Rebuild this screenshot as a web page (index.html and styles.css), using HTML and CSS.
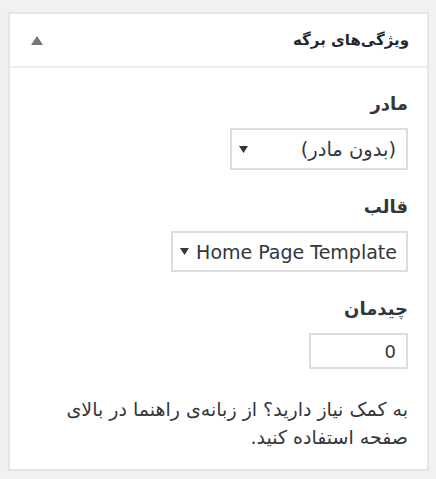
FILE: index.html
```html
<!DOCTYPE html>
<html lang="fa" dir="rtl">
<head>
<meta charset="utf-8">
<link rel="stylesheet" href="styles.css">
</head>
<body>
<div class="postbox">
  <div class="postbox-header">
    <h2 class="hndle">ویژگی‌های برگه</h2>
    <span class="toggle"><svg width="12" height="9" viewBox="0 0 12 9"><polygon points="6,0 12,9 0,9" fill="#72777c"/></svg></span>
  </div>
  <div class="inside">
    <p class="label">مادر</p>
    <div class="select select-parent">
      <span class="select-text">(بدون مادر)</span>
      <svg class="arrow" width="9" height="7" viewBox="0 0 9 7"><polygon points="0,0 9,0 4.5,7" fill="#32373c"/></svg>
    </div>
    <p class="label">قالب</p>
    <div class="select select-template">
      <span class="select-text ltr">Home Page Template</span>
      <svg class="arrow" width="9" height="7" viewBox="0 0 9 7"><polygon points="0,0 9,0 4.5,7" fill="#32373c"/></svg>
    </div>
    <p class="label">چیدمان</p>
    <div class="input-order">0</div>
    <p class="help">به کمک نیاز دارید؟ از زبانه‌ی راهنما در بالای صفحه استفاده کنید.</p>
  </div>
</div>
</body>
</html>
```
FILE: styles.css
```css
html, body {
  margin: 0;
  padding: 0;
  background: #f1f1f1;
}
body {
  font-family: "DejaVu Sans", "Noto Sans", sans-serif;
  color: #23282d;
  padding-top: 12px;
}
.postbox {
  margin: 0 7px 0 8px;
  background: #fff;
  border: 2px solid #e5e5e5;
  box-shadow: 0 1px 1px rgba(0,0,0,0.04);
  height: 459px;
  box-sizing: border-box;
}
.postbox-header {
  display: flex;
  align-items: center;
  justify-content: space-between;
  height: 52px;
  border-bottom: 2px solid #eeeeee;
  padding: 0 18px 0 21px;
}
.hndle {
  margin: 0;
  font-size: 15px;
  font-weight: bold;
  color: #23282d;
}
.toggle {
  display: flex;
  align-items: center;
  padding-top: 1px;
}
.inside {
  padding: 0 19px 0 20px;
  display: flex;
  flex-direction: column;
  align-items: flex-start;
}
.label {
  margin: 25px 0 12px;
  font-size: 18px;
  font-weight: bold;
  color: #32373c;
  line-height: 24px;
}
.label:first-child {
  margin-top: 24px;
}
.select {
  display: flex;
  align-items: center;
  justify-content: space-between;
  box-sizing: border-box;
  border: 2px solid #dddddd;
  background: #fff;
  color: #32373c;
}
.select-parent {
  width: 178px;
  height: 42px;
  padding: 0 10px 0 7px;
  font-size: 19.5px;
}
.select-template {
  width: 237px;
  height: 41px;
  padding: 0 9px 0 7px;
  font-size: 19px;
}
.ltr {
  direction: ltr;
}
.select-text {
  white-space: nowrap;
}
.input-order {
  box-sizing: border-box;
  width: 99px;
  height: 36px;
  border: 2px solid #dddddd;
  padding: 0 10px;
  font-size: 18px;
  color: #32373c;
  display: flex;
  align-items: center;
}
.help {
  margin: 26px 0 0;
  font-size: 19px;
  line-height: 28px;
  color: #32373c;
}
```
